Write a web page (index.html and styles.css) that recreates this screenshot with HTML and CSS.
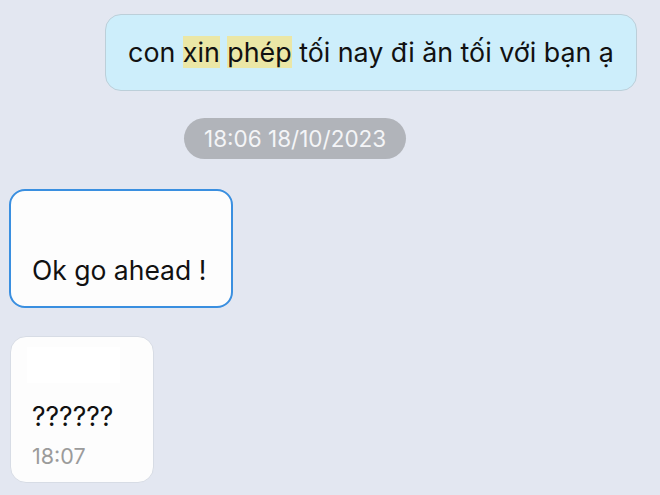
FILE: index.html
```html
<html>

<head>
    <meta charset="UTF-8">
    <meta name="viewport" content="width=device-width, initial-scale=1.0">
    <link rel="stylesheet" href="styles.css">
</head>

<body>
    <div class="chat">
        <div class="row sent">
            <div class="bubble out"><span>con <span class="hl">xin</span> <span class="hl">phép</span> tối nay đi ăn tối với bạn ạ</span></div>
        </div>
        <div class="row stamp">
            <div class="time">18:06 18/10/2023</div>
        </div>
        <div class="row">
            <div class="bubble in active">
                <div class="quote"></div>
                <div class="msg">Ok go ahead !</div>
            </div>
        </div>
        <div class="row">
            <div class="bubble in last">
                <div class="quote blank"></div>
                <div class="msg">??????</div>
                <div class="at">18:07</div>
            </div>
        </div>
    </div>
</body>

</html>
```

FILE: styles.css
```css
body {
    margin: 0;
    background: #e3e7f1;
    font-family: Inter, "Noto Sans", sans-serif;
    color: #111;
}
.chat {
    display: flex;
    flex-direction: column;
    padding: 14px 23px 0 9px;
}
.row {
    display: flex;
}
.sent {
    justify-content: flex-end;
}
.bubble {
    border-radius: 16px;
    box-sizing: border-box;
}
.out {
    width: 532px;
    height: 77px;
    background: #cdeefb;
    border: 1.5px solid #bccfd9;
    font-size: 26.8px;
    display: flex;
    align-items: center;
    justify-content: center;
    padding-bottom: 1px;
    white-space: nowrap;
}
.hl {
    background: #ebe7a6;
}
.stamp {
    margin-top: 27px;
    padding-left: 175px;
}
.time {
    background: #b1b4ba;
    color: #f4f5f7;
    font-size: 22.5px;
    height: 41px;
    line-height: 41px;
    padding: 0 20px;
    border-radius: 21px;
}
.in {
    background: #fdfdfd;
    padding: 0 21px;
}
.active {
    margin-top: 30px;
    width: 224px;
    height: 119px;
    border: 2px solid #3a8fe0;
}
.active .quote {
    height: 63px;
}
.msg {
    font-size: 26.5px;
}
.last {
    margin-top: 28px;
    margin-left: 1px;
    width: 144px;
    height: 147px;
    border: 1.5px solid #d7dce5;
    padding: 0 16px;
}
.blank {
    margin-top: 10px;
    width: 93px;
    height: 36px;
    background: #ffffff;
}
.last .msg {
    margin-top: 17px;
    padding-left: 5px;
}
.at {
    color: #9b9b9b;
    font-size: 21.5px;
    margin-top: 11px;
    padding-left: 5px;
}
```
